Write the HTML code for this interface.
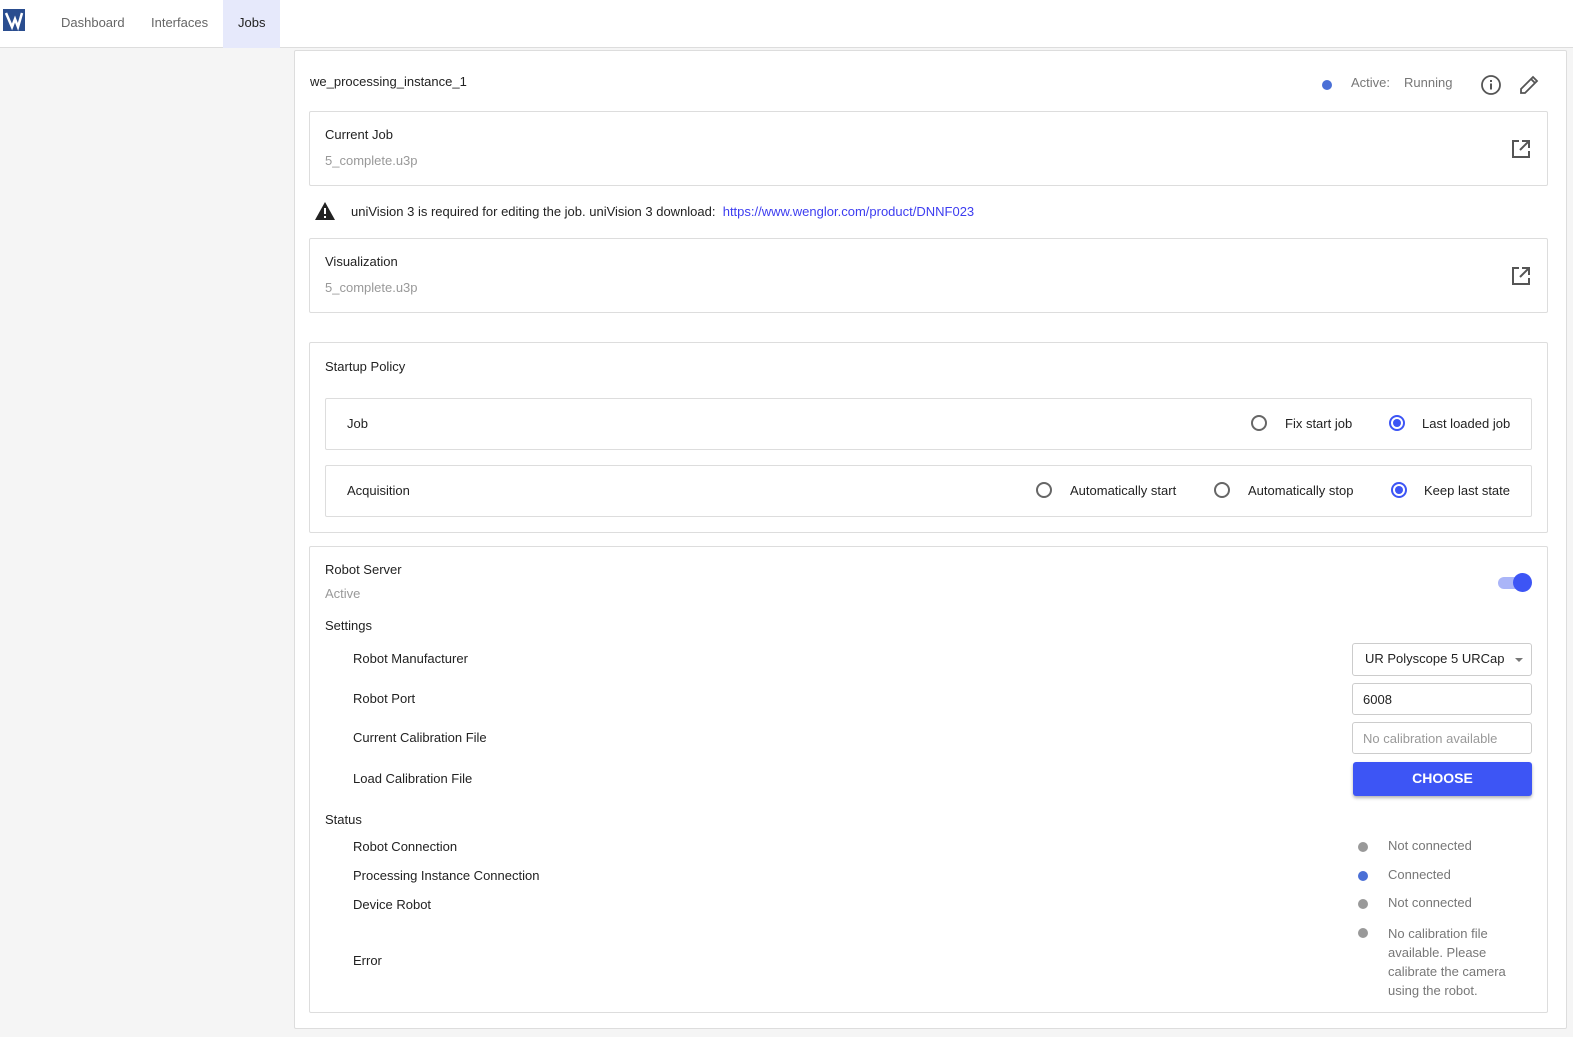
<!DOCTYPE html><html><head><meta charset="utf-8"><style>
*{box-sizing:border-box;margin:0;padding:0}
body{width:1573px;height:1037px;background:#f5f5f5;font-family:"Liberation Sans",Arial,sans-serif;font-size:13px;color:#222;position:relative;overflow:hidden}
.a{position:absolute}
.nav{left:0;top:0;width:1573px;height:48px;background:#fff;border-bottom:1px solid #ddd}
.nav span{position:absolute;top:15px;color:#666;font-size:13px}
.box{position:absolute;background:#fff;border:1px solid #ddd;border-radius:2px}
.g{color:#999}
.rad{position:absolute;width:16px;height:16px;border:2px solid #666;border-radius:50%}
.rad.on{border-color:#3d55f5}
.rad.on:after{content:"";position:absolute;left:2px;top:2px;width:8px;height:8px;border-radius:50%;background:#3d55f5}
.dot{position:absolute;width:10px;height:10px;border-radius:50%;background:#999}
.inp{position:absolute;left:1352px;width:180px;height:32px;border:1px solid #ccc;border-radius:3px;background:#fff;padding:8px 10px}
</style></head><body>
<div class="a nav">
<svg class="a" style="left:3px;top:9px" width="22" height="22"><rect width="22" height="22" fill="#2a4d8f"/><path d="M3 4 L9 18 L12 10 L15 18 L19 4" stroke="#fff" stroke-width="2.5" fill="none"/></svg>
<span style="left:61px">Dashboard</span><span style="left:151px">Interfaces</span>
<div class="a" style="left:223px;top:0;width:57px;height:48px;background:#e6e9fb"></div>
<span style="left:238px;color:#222">Jobs</span>
</div>
<div class="box" style="left:294px;top:50px;width:1273px;height:979px"></div>
<div class="a" style="left:310px;top:74px;">we_processing_instance_1</div>
<div class="dot" style="left:1322px;top:80px;background:#4a6fd6"></div>
<div class="a" style="left:1351px;top:75px;color:#777">Active:</div>
<div class="a" style="left:1404px;top:75px;color:#777">Running</div>
<svg class="a" style="left:1480px;top:74px" width="22" height="22"><circle cx="11" cy="11" r="9" fill="none" stroke="#555" stroke-width="1.8"/><rect x="10" y="9.5" width="2" height="6" fill="#555"/><rect x="10" y="6" width="2" height="2" fill="#555"/></svg>
<svg class="a" style="left:1518px;top:74px" width="22" height="22"><path d="M3 19 L3 15 L15 3 L19 7 L7 19 Z M13 5 L17 9" stroke="#555" stroke-width="1.8" fill="none"/></svg>

<div class="box" style="left:309px;top:111px;width:1239px;height:75px"></div>
<div class="a" style="left:325px;top:127px">Current Job</div>
<div class="a g" style="left:325px;top:153px">5_complete.u3p</div>
<svg class="a" style="left:1510px;top:138px" width="22" height="22"><path d="M9 3 H3 V19 H19 V13 M12 3 H19 V10 M19 3 L10 12" stroke="#555" stroke-width="2" fill="none"/></svg>

<svg class="a" style="left:314px;top:201px" width="22" height="20"><path d="M11 1 L21 19 H1 Z" fill="#222"/><rect x="10" y="7" width="2" height="6" fill="#fff"/><rect x="10" y="15" width="2" height="2" fill="#fff"/></svg>
<div class="a" style="left:351px;top:204px">uniVision 3 is required for editing the job. uniVision 3 download: &nbsp;<span style="color:#3d3df0">https://www.wenglor.com/product/DNNF023</span></div>

<div class="box" style="left:309px;top:238px;width:1239px;height:75px"></div>
<div class="a" style="left:325px;top:254px">Visualization</div>
<div class="a g" style="left:325px;top:280px">5_complete.u3p</div>
<svg class="a" style="left:1510px;top:265px" width="22" height="22"><path d="M9 3 H3 V19 H19 V13 M12 3 H19 V10 M19 3 L10 12" stroke="#555" stroke-width="2" fill="none"/></svg>

<div class="box" style="left:309px;top:342px;width:1239px;height:191px"></div>
<div class="a" style="left:325px;top:359px">Startup Policy</div>
<div class="box" style="left:325px;top:398px;width:1207px;height:52px"></div>
<div class="a" style="left:347px;top:416px">Job</div>
<div class="rad" style="left:1251px;top:415px"></div><div class="a" style="left:1285px;top:416px">Fix start job</div>
<div class="rad on" style="left:1389px;top:415px"></div><div class="a" style="left:1422px;top:416px">Last loaded job</div>
<div class="box" style="left:325px;top:465px;width:1207px;height:52px"></div>
<div class="a" style="left:347px;top:483px">Acquisition</div>
<div class="rad" style="left:1036px;top:482px"></div><div class="a" style="left:1070px;top:483px">Automatically start</div>
<div class="rad" style="left:1214px;top:482px"></div><div class="a" style="left:1248px;top:483px">Automatically stop</div>
<div class="rad on" style="left:1391px;top:482px"></div><div class="a" style="left:1424px;top:483px">Keep last state</div>

<div class="box" style="left:309px;top:546px;width:1239px;height:467px"></div>
<div class="a" style="left:325px;top:562px">Robot Server</div>
<div class="a g" style="left:325px;top:586px">Active</div>
<div class="a" style="left:1498px;top:577px;width:32px;height:12px;border-radius:6px;background:#aab5f8"></div>
<div class="a" style="left:1513px;top:573px;width:19px;height:19px;border-radius:50%;background:#3d55f5"></div>
<div class="a" style="left:325px;top:618px">Settings</div>
<div class="a" style="left:353px;top:651px">Robot Manufacturer</div>
<div class="a" style="left:353px;top:691px">Robot Port</div>
<div class="a" style="left:353px;top:730px">Current Calibration File</div>
<div class="a" style="left:353px;top:771px">Load Calibration File</div>
<div class="inp" style="top:643px;height:33px;padding:7px 12px">UR Polyscope 5 URCap<span class="a" style="left:162px;top:14px;border:4px solid transparent;border-top-color:#777"></span></div>
<div class="inp" style="top:683px">6008</div>
<div class="inp g" style="top:722px">No calibration available</div>
<div class="a" style="left:1353px;top:762px;width:179px;height:34px;background:#3d55f5;border-radius:3px;color:#fff;font-weight:bold;font-size:14px;text-align:center;line-height:33px;box-shadow:0 2px 3px rgba(0,0,0,.3)">CHOOSE</div>
<div class="a" style="left:325px;top:812px">Status</div>
<div class="a" style="left:353px;top:839px">Robot Connection</div>
<div class="a" style="left:353px;top:868px">Processing Instance Connection</div>
<div class="a" style="left:353px;top:897px">Device Robot</div>
<div class="a" style="left:353px;top:953px">Error</div>
<div class="dot" style="left:1358px;top:842px"></div><div class="a" style="left:1388px;top:838px;color:#777">Not connected</div>
<div class="dot" style="left:1358px;top:871px;background:#4a6fd6"></div><div class="a" style="left:1388px;top:867px;color:#777">Connected</div>
<div class="dot" style="left:1358px;top:899px"></div><div class="a" style="left:1388px;top:895px;color:#777">Not connected</div>
<div class="dot" style="left:1358px;top:928px"></div><div class="a" style="left:1388px;top:924px;color:#777;line-height:19px;width:120px">No calibration file available. Please calibrate the camera using the robot.</div>
</body></html>
